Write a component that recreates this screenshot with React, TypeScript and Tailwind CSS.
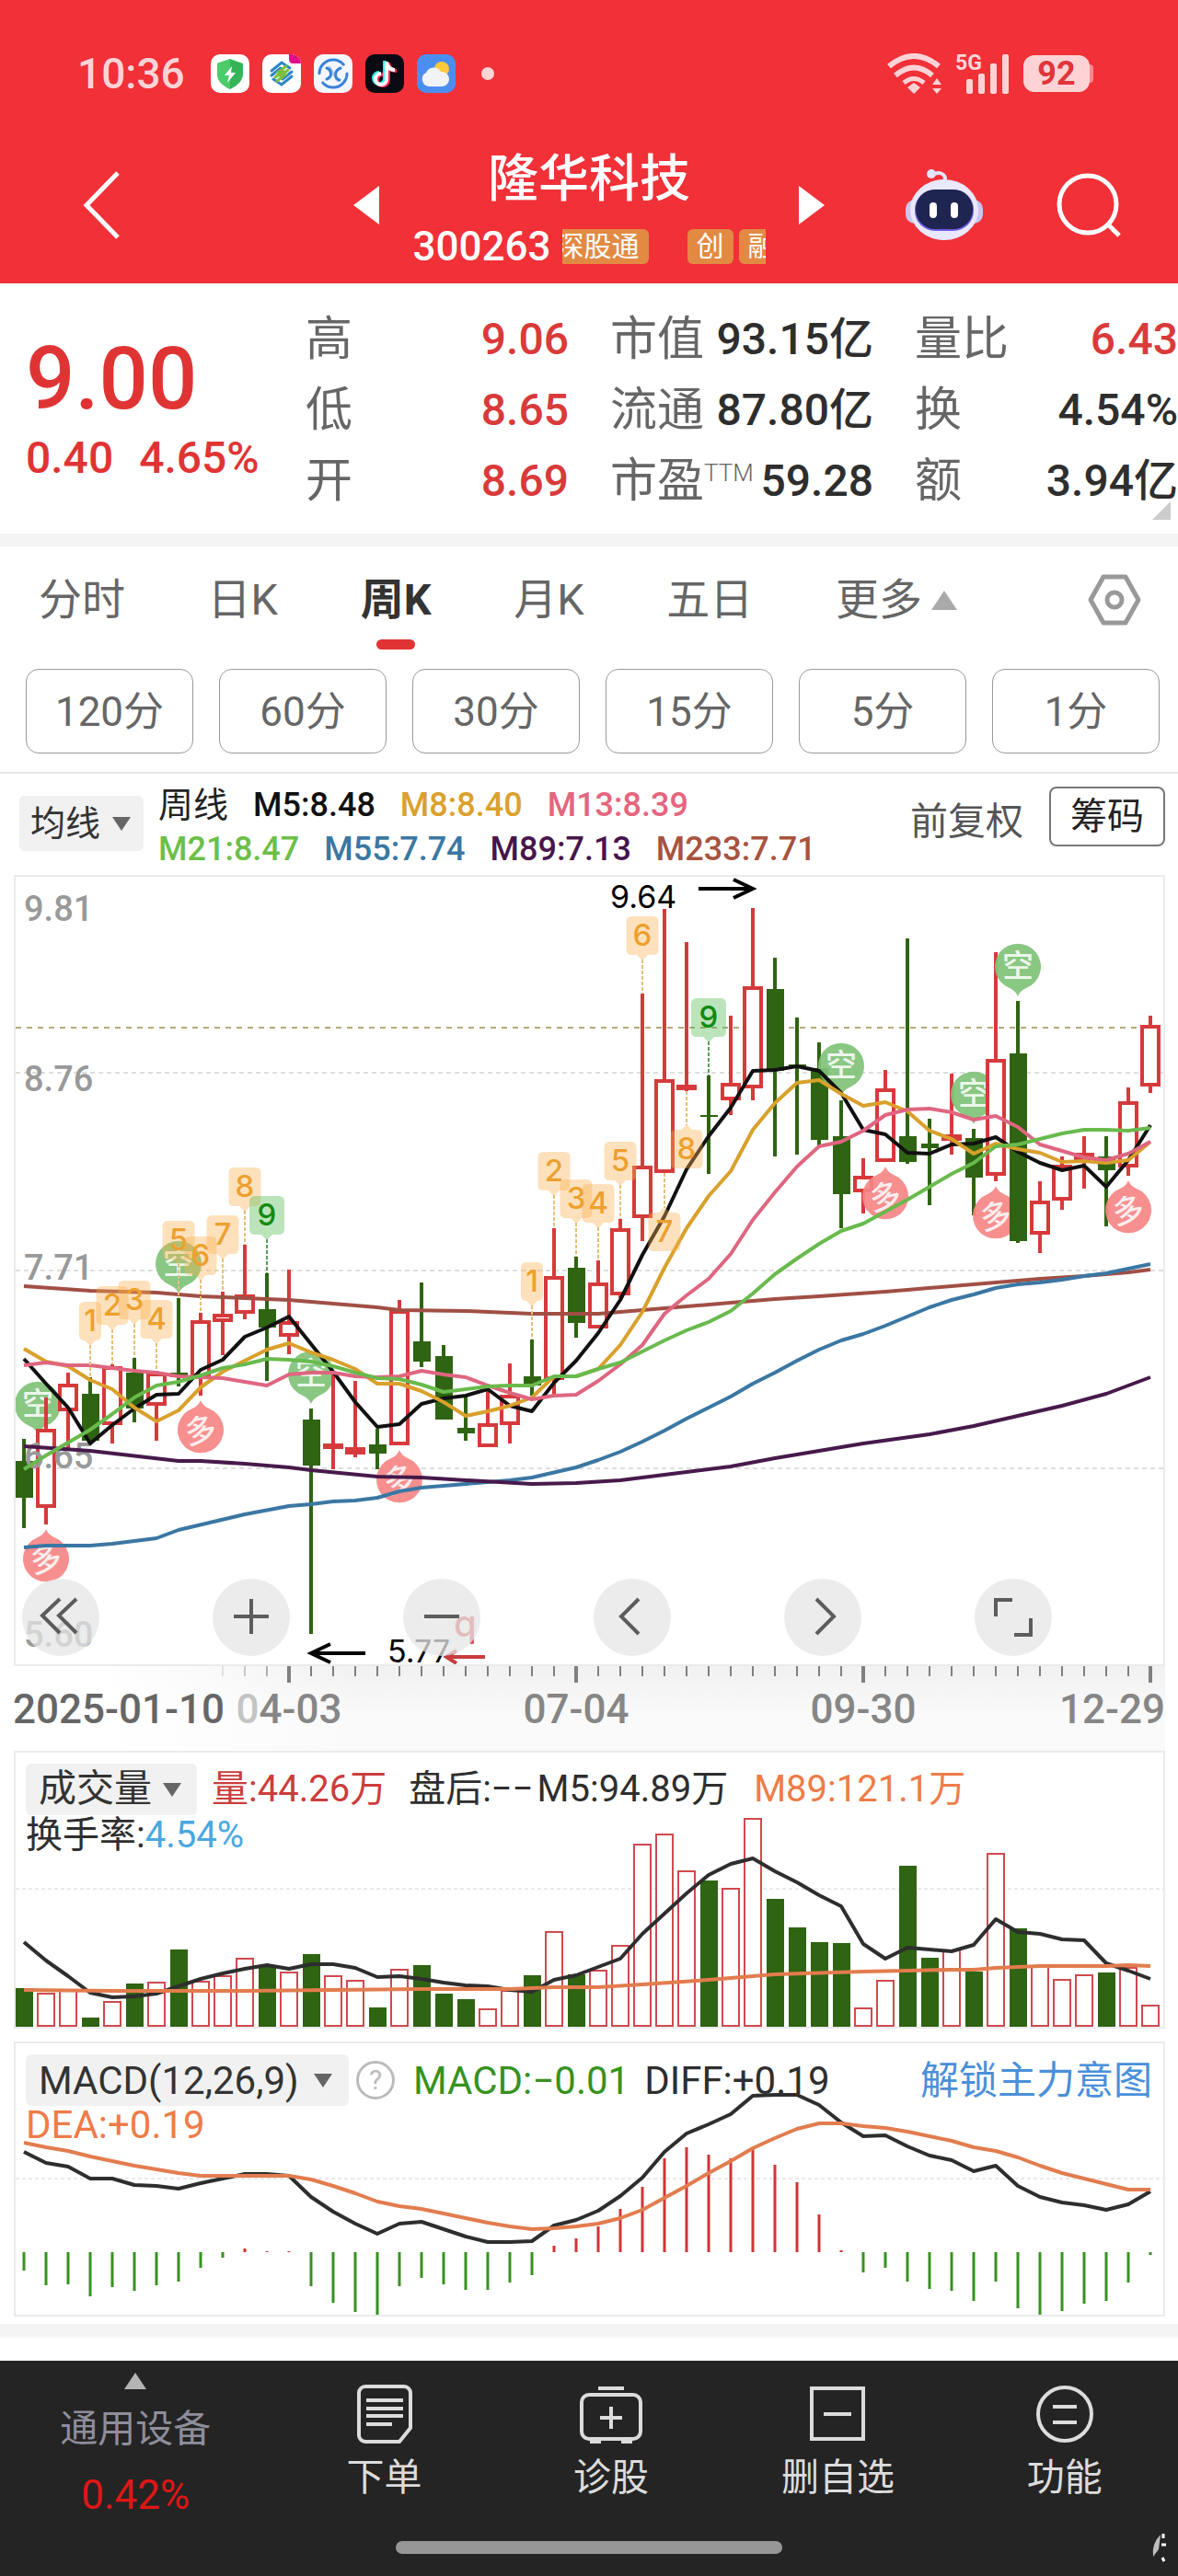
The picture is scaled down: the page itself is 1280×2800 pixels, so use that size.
import { type ReactNode } from "react";

/** Every candle sits on a fixed 24px pitch; the first one is centred on x=26. */
const STEP = 24;
const ORIGIN = 26;
const xAt = (i: number) => ORIGIN + STEP * i;

const RED = "#d63a3c";
const GREEN = "#2f6412";

// [up, high, bodyTop, bodyBottom, low]
type Candle = [0 | 1, number, number, number, number];

const CANDLES: Candle[] = [
  [0, 1563, 1587, 1627, 1660],
  [1, 1518, 1552, 1638, 1656],
  [1, 1491, 1503, 1533, 1575],
  [0, 1496, 1514, 1565, 1566],
  [1, 1482, 1484, 1548, 1568],
  [0, 1475, 1491, 1530, 1545],
  [1, 1489, 1491, 1527, 1565],
  [0, 1410, 1491, 1496, 1506],
  [1, 1426, 1434, 1496, 1516],
  [1, 1403, 1427, 1436, 1472],
  [1, 1352, 1406, 1427, 1433],
  [0, 1383, 1422, 1442, 1500],
  [1, 1379, 1435, 1452, 1471],
  [0, 1530, 1542, 1592, 1775],
  [1, 1491, 1568, 1574, 1596],
  [1, 1500, 1572, 1580, 1583],
  [0, 1552, 1569, 1579, 1596],
  [1, 1412, 1423, 1570, 1570],
  [0, 1393, 1457, 1479, 1485],
  [0, 1461, 1473, 1542, 1542],
  [0, 1516, 1551, 1557, 1565],
  [1, 1511, 1546, 1572, 1572],
  [1, 1481, 1515, 1548, 1568],
  [0, 1455, 1495, 1505, 1516],
  [1, 1334, 1386, 1499, 1516],
  [0, 1365, 1377, 1437, 1453],
  [1, 1369, 1393, 1443, 1443],
  [1, 1324, 1334, 1407, 1410],
  [1, 1079, 1266, 1323, 1348],
  [1, 987, 1172, 1274, 1274],
  [1, 1023, 1178, 1184, 1185],
  [0, 1168, 1211, 1213, 1275],
  [1, 1103, 1176, 1195, 1211],
  [1, 986, 1071, 1182, 1195],
  [0, 1040, 1074, 1163, 1256],
  [0, 1105, 1156, 1159, 1254],
  [0, 1132, 1160, 1238, 1244],
  [0, 1195, 1234, 1297, 1334],
  [1, 1258, 1277, 1295, 1318],
  [1, 1162, 1182, 1262, 1262],
  [0, 1019, 1234, 1262, 1264],
  [0, 1215, 1242, 1247, 1309],
  [1, 1166, 1232, 1239, 1254],
  [0, 1226, 1236, 1279, 1320],
  [1, 1034, 1150, 1277, 1283],
  [0, 1087, 1144, 1348, 1350],
  [1, 1283, 1304, 1341, 1361],
  [1, 1256, 1265, 1304, 1314],
  [1, 1234, 1252, 1260, 1291],
  [0, 1234, 1256, 1271, 1332],
  [1, 1181, 1196, 1268, 1277],
  [1, 1103, 1113, 1180, 1187],
];

const M5 = [
  1476, 1503, 1529, 1568, 1548, 1530, 1515, 1514, 1488, 1477, 1452, 1442, 1430,
  1460, 1490, 1523, 1550, 1547, 1525, 1519, 1516, 1509, 1527, 1533, 1502, 1478,
  1448, 1412, 1363, 1321, 1270, 1234, 1203, 1163, 1162, 1158, 1163, 1187, 1227,
  1232, 1252, 1253, 1243, 1242, 1235, 1251, 1263, 1271, 1266, 1289, 1260, 1222,
];
const M8 = [
  1465, 1479, 1484, 1499, 1509, 1529, 1544, 1532, 1507, 1490, 1478, 1466, 1459,
  1469, 1477, 1487, 1503, 1503, 1511, 1523, 1538, 1533, 1527, 1518, 1495, 1495,
  1487, 1461, 1425, 1377, 1334, 1299, 1272, 1227, 1198, 1176, 1173, 1188, 1201,
  1197, 1207, 1228, 1237, 1253, 1242, 1248, 1252, 1262, 1261, 1263, 1260, 1240,
];
const M13 = [
  1483, 1480, 1483, 1483, 1486, 1489, 1491, 1495, 1496, 1497, 1501, 1505, 1493,
  1491, 1491, 1495, 1496, 1495, 1489, 1493, 1496, 1505, 1513, 1520, 1516, 1515,
  1500, 1482, 1461, 1427, 1407, 1389, 1362, 1325, 1295, 1267, 1245, 1240, 1228,
  1211, 1205, 1204, 1208, 1216, 1212, 1224, 1243, 1250, 1257, 1260, 1253, 1240,
];
const M21 = [
  1596, 1581, 1567, 1553, 1536, 1518, 1505, 1501, 1494, 1486, 1482, 1476, 1477,
  1479, 1484, 1491, 1497, 1498, 1504, 1512, 1509, 1506, 1505, 1505, 1495, 1495,
  1487, 1480, 1468, 1456, 1445, 1436, 1424, 1405, 1384, 1367, 1351, 1337, 1329,
  1316, 1303, 1289, 1275, 1263, 1245, 1243, 1237, 1231, 1227, 1227, 1228, 1225,
];

// slow averages only need their turning points: [index, y]
type Knot = [number, number];
const M55: Knot[] = [
  [0, 1681], [1, 1679], [3, 1679], [4, 1677], [6, 1671], [7, 1662], [10, 1645],
  [12, 1636], [13, 1634], [14, 1631], [15, 1630], [16, 1627], [17, 1620],
  [18, 1616], [20, 1612], [22, 1608], [23, 1605], [25, 1594], [26, 1586],
  [27, 1577], [28, 1566], [29, 1554], [30, 1541], [31, 1529], [32, 1517],
  [33, 1503], [34, 1491], [35, 1478], [36, 1466], [37, 1456], [38, 1449],
  [39, 1440], [40, 1430], [41, 1420], [42, 1412], [43, 1406], [44, 1399],
  [45, 1395], [46, 1393], [47, 1390], [48, 1386], [49, 1383], [50, 1378],
  [51, 1373],
];
const M89: Knot[] = [
  [0, 1571], [3, 1576], [7, 1587], [8, 1587], [10, 1590], [12, 1594],
  [13, 1597], [16, 1604], [18, 1605], [20, 1608], [23, 1612], [25, 1611],
  [27, 1608], [29, 1602], [31, 1596], [32, 1593], [34, 1584], [38, 1568],
  [41, 1558], [43, 1549], [45, 1538], [47, 1527], [49, 1514], [51, 1496],
];
const M233: Knot[] = [
  [0, 1397], [3, 1402], [6, 1404], [8, 1408], [12, 1412], [16, 1420],
  [17, 1423], [20, 1424], [23, 1427], [26, 1427], [29, 1421], [32, 1415],
  [34, 1411], [36, 1408], [39, 1403], [40, 1401], [44, 1393], [46, 1389],
  [48, 1386], [50, 1382], [51, 1379],
];

const VOLUME = [
  42, 37, 41, 10, 28, 47, 49, 84, 50, 56, 75, 66, 60, 79, 56, 51, 21, 63, 67,
  36, 30, 20, 40, 56, 104, 57, 62, 89, 199, 210, 170, 159, 151, 227, 139, 108,
  92, 91, 21, 51, 175, 75, 84, 60, 189, 107, 66, 52, 57, 59, 65, 24,
];
const VOL_M5 = [
  208, 228, 245, 263, 268, 267, 264, 256, 248, 242, 237, 233, 237, 232, 232,
  236, 246, 245, 248, 252, 255, 256, 260, 262, 249, 244, 235, 226, 199, 177,
  155, 135, 123, 117, 131, 143, 157, 169, 210, 226, 214, 216, 218, 211, 183,
  197, 199, 205, 206, 231, 239, 248,
];
const VOL_M89: Knot[] = [
  [0, 260], [4, 261], [10, 261], [14, 260], [18, 259], [22, 259], [24, 257],
  [26, 257], [28, 254], [31, 249], [34, 243], [38, 240], [40, 239], [42, 238],
  [43, 238], [44, 236], [46, 234], [49, 234], [50, 233], [51, 234],
];

const MACD = [
  -20, -36, -35, -48, -38, -42, -36, -32, -17, -6, 4, 1, 1, -37, -55, -65, -70,
  -37, -28, -35, -41, -41, -33, -25, 7, 15, 28, 47, 71, 102, 114, 106, 102,
  112, 95, 76, 41, 2, -22, -17, -32, -40, -42, -53, -32, -61, -69, -64, -56,
  -53, -33, -3,
];
const DIFF = [
  120, 132, 136, 149, 149, 156, 157, 160, 154, 149, 144, 144, 146, 169, 185,
  198, 209, 198, 196, 204, 212, 218, 218, 217, 200, 194, 184, 168, 148, 120,
  100, 90, 79, 59, 58, 58, 69, 88, 103, 102, 114, 124, 129, 141, 135, 157, 169,
  175, 178, 183, 177, 163,
];
const DEA = [
  110, 115, 119, 125, 130, 135, 139, 143, 146, 146, 146, 146, 146, 150, 157,
  165, 174, 179, 182, 187, 192, 197, 201, 204, 203, 201, 198, 192, 183, 170,
  157, 143, 130, 116, 105, 95, 89, 89, 92, 94, 98, 103, 108, 115, 119, 126,
  135, 143, 149, 155, 161, 161,
];

// Nine-turn sequence flags: [index, digit, top of the box]
const FLAGS: [number, number, number][] = [
  [3, 1, 1414], [4, 2, 1397], [5, 3, 1391], [6, 4, 1412], [7, 5, 1326],
  [8, 6, 1343], [9, 7, 1320], [10, 8, 1268], [11, 9, 1299], [23, 1, 1371],
  [24, 2, 1251], [25, 3, 1281], [26, 4, 1286], [27, 5, 1240], [28, 6, 995],
  [31, 9, 1084],
];
// same flags, hung below the candle
const FLAGS_BELOW: [number, number, number][] = [
  [29, 7, 1317],
  [30, 8, 1227],
];

const SHORT_SIGNALS = [0, 7, 13, 37, 43, 45];
const LONG_SIGNALS = [1, 8, 17, 39, 44, 50];

const series = (ys: number[]) => ys.map((y, i) => `${xAt(i)},${y}`).join(" ");
const knots = (ks: Knot[]) => ks.map(([i, y]) => `${xAt(i)},${y}`).join(" ");

function Line({ points, color }: { points: string; color: string }) {
  return (
    <polyline
      points={points}
      fill="none"
      stroke={color}
      strokeWidth="4"
      strokeLinejoin="round"
    />
  );
}

function Signal({ x, y, kind }: { x: number; y: number; kind: "short" | "long" }) {
  const short = kind === "short";
  return (
    <g transform={`translate(${x} ${y})`}>
      <path
        d={
          short
            ? "M0 33C-2 28-5 26-9 24A25 25 0 1 1 9 24C5 26 2 28 0 33Z"
            : "M0-33C-2-28-5-26-9-24A25 25 0 1 0 9-24C5-26 2-28 0-33Z"
        }
        fill={short ? "#7fc277" : "#f68585"}
        fillOpacity="0.92"
      />
      <text
        textAnchor="middle"
        y="12"
        fontSize="34"
        fontWeight="500"
        fill="#fff"
        fillOpacity="0.85"
        transform={short ? undefined : "rotate(-12)"}
      >
        {short ? "空" : "多"}
      </text>
    </g>
  );
}

function Flag({ i, n, top, below }: { i: number; n: number; top: number; below?: boolean }) {
  const x = xAt(i);
  const w = n === 1 ? 24 : n === 9 ? 38 : 35;
  const color = n === 9 ? "#4db74d" : "#f9b04e";
  const tip = below ? top - 5 : top + 47;
  return (
    <g>
      <line
        x1={x}
        x2={x}
        y1={below ? CANDLES[i][4] : tip}
        y2={below ? tip : CANDLES[i][1]}
        stroke={n === 9 ? "#5a9a5a" : "#e3c07a"}
        strokeWidth="2"
        strokeDasharray="4 2"
      />
      <g fill={color} fillOpacity="0.38">
        <path
          d={
            below
              ? `M${x - w / 2 + 6} ${top}h${w / 2 - 12}l6-6 6 6h${w / 2 - 12}q6 0 6 6v30q0 6-6 6h${12 - w}q-6 0-6-6v-30q0-6 6-6z`
              : `M${x - w / 2 + 6} ${top}h${w - 12}q6 0 6 6v30q0 6-6 6h${12 - w / 2}l-6 6-6-6h${12 - w / 2}q-6 0-6-6v-30q0-6 6-6z`
          }
        />
      </g>
      <text
        x={x}
        y={top + 32}
        textAnchor="middle"
        fontSize="33"
        fontWeight="500"
        fill={n === 9 ? "#128a12" : "#eda02e"}
        className="font-[Inter]"
      >
        {n}
      </text>
    </g>
  );
}

function CandleChart() {
  return (
    <svg viewBox="17 952 1247 856" className="block w-full" role="img" aria-label="周K线图">
      {[1165, 1380, 1595].map((y) => (
        <line key={y} x1="17" x2="1264" y1={y} y2={y} stroke="#dedede" strokeWidth="2" strokeDasharray="5 4" />
      ))}
      <line x1="17" x2="1264" y1="1116" y2="1116" stroke="#b5a878" strokeWidth="2" strokeDasharray="6 6" />

      {CANDLES.map(([up, high, top, bottom, low], i) => {
        const x = xAt(i);
        return (
          <g key={i}>
            {up ? (
              <>
                <line x1={x} x2={x} y1={high} y2={top} stroke={RED} strokeWidth="4" />
                <line x1={x} x2={x} y1={bottom} y2={low} stroke={RED} strokeWidth="4" />
                <rect
                  x={x - 9}
                  y={top + 2}
                  width="18"
                  height={Math.max(bottom - top - 4, 2)}
                  fill="#fff"
                  stroke={RED}
                  strokeWidth="4"
                />
              </>
            ) : (
              <>
                <line x1={x} x2={x} y1={high} y2={low} stroke={GREEN} strokeWidth="4" />
                <rect x={x - 9} y={top} width="19" height={bottom - top} fill={GREEN} />
              </>
            )}
            {SHORT_SIGNALS.includes(i) && (
              <Signal kind="short" x={Math.max(x, 41)} y={high - 38} />
            )}
            {LONG_SIGNALS.includes(i) && <Signal kind="long" x={x} y={low + 38} />}
          </g>
        );
      })}

      <g fontSize="38" fontWeight="500" fill="#999">
        <text x="26" y="1000">9.81</text>
        <text x="26" y="1185">8.76</text>
        <text x="26" y="1390">7.71</text>
        <text x="26" y="1595">6.65</text>
        <text x="26" y="1789">5.60</text>
      </g>

      <Line points={knots(M233)} color="#a14f45" />
      <Line points={knots(M55)} color="#3b77a3" />
      <Line points={knots(M89)} color="#471a4b" />
      <Line points={series(M5)} color="#111" />
      <Line points={series(M8)} color="#d9a02c" />
      <Line points={series(M13)} color="#df6680" />
      <Line points={series(M21)} color="#69ba4d" />

      {FLAGS.map(([i, n, top]) => (
        <Flag key={i} i={i} n={n} top={top} />
      ))}
      {FLAGS_BELOW.map(([i, n, top]) => (
        <Flag key={i} i={i} n={n} top={top} below />
      ))}

      <g fontSize="34" fill="#000" className="font-[Inter]">
        <text x="663" y="986">9.64</text>
        <text x="421" y="1806">5.77</text>
      </g>
      <g fill="none" stroke="#000" strokeWidth="4">
        <path d="M759 965h58M797 955l21 10-21 10" />
        <path d="M397 1796h-58M359 1786l-21 10 21 10" />
      </g>
      <path d="M527 1800h-40M496 1793l-11 7 11 7" fill="none" stroke="#c83c3c" strokeWidth="4" />
      <text x="493" y="1778" fontSize="40" fontWeight="500" fill="#d64545" className="font-[Inter]">q</text>
    </svg>
  );
}

function TimeAxis() {
  const ticks = Array.from({ length: 43 }, (_, k) => k + 9);
  return (
    <svg viewBox="0 1811 1280 92" className="block w-full" role="img" aria-label="日期">
      <defs>
        <linearGradient id="axis-x">
          <stop offset="0.08" stopColor="#fff" />
          <stop offset="0.3" stopColor="#fff" stopOpacity="0" />
        </linearGradient>
        <linearGradient id="axis-y" x2="0" y2="1">
          <stop offset="0" stopColor="#f1f1f1" />
          <stop offset="0.6" stopColor="#fafafa" />
          <stop offset="1" stopColor="#fafafa" />
        </linearGradient>
      </defs>
      <rect x="15" y="1811" width="1251" height="92" fill="url(#axis-y)" />
      <rect x="15" y="1811" width="1251" height="92" fill="url(#axis-x)" />
      {ticks.map((i) => {
        const major = (i - 12) % 13 === 0;
        return (
          <line
            key={i}
            x1={xAt(i)}
            x2={xAt(i)}
            y1="1811"
            y2={major ? 1829 : 1822}
            stroke="#808080"
            strokeOpacity={i < 12 ? 0.2 + (i - 9) * 0.2 : 1}
            strokeWidth={major ? 4 : 2}
          />
        );
      })}
      <g fontSize="44" fontWeight="500" fill="#868686">
        <text x="14" y="1873" fill="#666">2025-01-10</text>
        <text x="314" y="1873" textAnchor="middle">
          <tspan fill="#c4c4c4">0</tspan>
          4-03
        </text>
        <text x="626" y="1873" textAnchor="middle">07-04</text>
        <text x="938" y="1873" textAnchor="middle">09-30</text>
        <text x="1266" y="1873" textAnchor="end">12-29</text>
      </g>
    </svg>
  );
}

function VolumeChart() {
  return (
    <svg viewBox="17 2 1247 298" className="block w-full [grid-area:1/1]" role="img" aria-label="成交量图">
      <line x1="17" x2="1264" y1="150" y2="150" stroke="#d4d4d4" strokeWidth="1" strokeDasharray="4 3" />
      {VOLUME.map((h, i) =>
        CANDLES[i][0] ? (
          <rect key={i} x={xAt(i) - 9} y={301 - h} width="18" height={h - 2} fill="#fff" stroke="#cf4a4e" strokeWidth="2" />
        ) : (
          <rect key={i} x={xAt(i) - 9} y={300 - h} width="19" height={h} fill={GREEN} />
        ),
      )}
      <Line points={series(VOL_M5)} color="#2e2e2e" />
      <Line points={knots(VOL_M89)} color="#e37c4e" />
    </svg>
  );
}

function MacdChart() {
  return (
    <svg viewBox="17 2 1247 295" className="block w-full [grid-area:1/1]" role="img" aria-label="MACD图">
      <line x1="17" x2="1264" y1="149" y2="149" stroke="#d4d4d4" strokeWidth="1" strokeDasharray="4 3" />
      {MACD.map((v, i) => (
        <line
          key={i}
          x1={xAt(i)}
          x2={xAt(i)}
          y1="229"
          y2={229 - v}
          stroke={v > 0 ? "#d03535" : "#36921f"}
          strokeWidth="3"
        />
      ))}
      <Line points={series(DIFF)} color="#2e2e2e" />
      <Line points={series(DEA)} color="#e37c4e" />
    </svg>
  );
}

function Caret({ up, className }: { up?: boolean; className: string }) {
  return (
    <svg viewBox="0 0 20 15" className={className} fill="currentColor" aria-hidden="true">
      <path d={up ? "M10 0l10 15H0z" : "M0 0h20L10 15z"} />
    </svg>
  );
}

function Picker({ label, value, className }: { label: string; value: string; className: string }) {
  return (
    <label className={`relative flex shrink-0 items-center rounded-md bg-[#f1f1f1] text-[#333] ${className}`}>
      <select aria-label={label} defaultValue={value} className="appearance-none bg-transparent outline-none">
        <option>{value}</option>
      </select>
      <Caret className="pointer-events-none w-5 text-[#666]" />
    </label>
  );
}

function AppIcon({ bg, children }: { bg: string; children: ReactNode }) {
  return (
    <svg viewBox="0 0 42 42" className="size-[42px]" aria-hidden="true">
      <rect width="42" height="42" rx="10" fill={bg} />
      {children}
    </svg>
  );
}

function StatusBar() {
  return (
    <div className="flex h-12 items-center pr-[92px] pl-[84px] text-[#ffd3d6]">
      <span className="text-[46px] leading-none font-medium">10:36</span>
      <div className="ml-[28px] flex items-center gap-[14px]">
        <AppIcon bg="#fff">
          <path d="M21 5l14 5v11c0 8-6 13-14 17C13 34 7 29 7 21V10z" fill="#35b558" />
          <path d="M21 5v33C13 34 7 29 7 21V10z" fill="#4ccb6b" />
          <path d="M23 13l-8 10h5l-2 8 9-11h-5z" fill="#fff" />
        </AppIcon>
        <AppIcon bg="#fff">
          <g fill="none" strokeWidth="3" strokeLinecap="round">
            <path d="M10 18l11-9 9 6M10 23l10-8" stroke="#2a86c8" />
            <path d="M32 24l-11 9-9-6M32 19l-10 8" stroke="#2a86c8" />
            <path d="M14 25l7-6h-3l8-6M28 17l-7 6h3l-8 6" stroke="#7cbf3f" />
          </g>
          <path d="M29 0h3a10 10 0 0 1 10 10h-9q-4 0-4-5z" fill="#e0108a" />
        </AppIcon>
        <AppIcon bg="#f3f7fd">
          <g fill="none" stroke="#3a82d8" strokeWidth="3" strokeLinecap="round">
            <circle cx="21" cy="21" r="15" strokeDasharray="36 11" />
            <path d="M14 15c6 2 6 10 0 12M29 15c-7 3-7 11-1 13" />
            <path d="M17 14l9 15" strokeOpacity="0.35" />
          </g>
        </AppIcon>
        <AppIcon bg="#0a0a12">
          <g fill="none" strokeWidth="4">
            <path d="M23 8v19a6 6 0 1 1-6-6M23 9c1 5 4 8 9 8" stroke="#25f4ee" transform="translate(-2 -1)" />
            <path d="M23 8v19a6 6 0 1 1-6-6M23 9c1 5 4 8 9 8" stroke="#fe2c55" transform="translate(2 1)" />
            <path d="M23 8v19a6 6 0 1 1-6-6M23 9c1 5 4 8 9 8" stroke="#fff" />
          </g>
        </AppIcon>
        <AppIcon bg="#4a8ff0">
          <circle cx="27" cy="16" r="8" fill="#ffc93a" />
          <path d="M13 35a8 8 0 0 1-3-15 9 9 0 0 1 16-1 8 8 0 0 1 2 16z" fill="#f1f3f6" />
        </AppIcon>
      </div>
      <span className="ml-7 size-[14px] rounded-full bg-current" />

      <div className="ml-auto flex items-center gap-[14px]">
        <svg viewBox="0 0 60 44" className="h-11 w-[60px]" fill="none" stroke="currentColor" aria-hidden="true">
          <g strokeWidth="6">
            <path d="M2 14Q29-8 56 14" />
            <path d="M9 24Q29 7 49 24" />
            <path d="M18 32Q29 23 40 32" strokeWidth="5" />
          </g>
          <path d="M29 32l7 5-7 7-7-7z" fill="currentColor" stroke="none" />
          <path d="M54 27l5 7H49zM54 44l5-6H49z" fill="currentColor" stroke="none" />
        </svg>
        <svg viewBox="0 0 60 44" className="h-11 w-[60px] overflow-visible" fill="currentColor" aria-hidden="true">
          <text x="0" y="18" fontSize="23" fontWeight="700">5G</text>
          <rect x="12" y="28" width="7" height="16" rx="2" />
          <rect x="25" y="22" width="7" height="22" rx="2" />
          <rect x="38" y="11" width="7" height="33" rx="2" />
          <rect x="51" y="1" width="7" height="43" rx="2" />
        </svg>
        <div className="flex items-center">
          <span className="flex h-10 w-[72px] items-center justify-center rounded-xl bg-current">
            <span className="text-[36px] leading-none font-bold text-[#e0353b]">92</span>
          </span>
          <span className="h-5 w-1 rounded-r-md bg-[#f78a8e]" />
        </div>
      </div>
    </div>
  );
}

function Tag({ children }: { children: ReactNode }) {
  return <span className="shrink-0 rounded-md bg-[#e28a43] px-[10px] text-[30px] leading-[38px]">{children}</span>;
}

function TitleBar() {
  return (
    <div className="grid grid-cols-[1fr_auto_1fr] items-center pt-[52px] pb-[18px] text-white">
      <button type="button" aria-label="返回" className="ml-[90px] w-10">
        <svg viewBox="0 0 40 74" className="h-[74px] w-10" fill="none" stroke="currentColor" strokeWidth="5">
          <path d="M38 2L4 37l34 35" />
        </svg>
      </button>

      <div className="flex items-center gap-9">
        <button type="button" aria-label="上一只">
          <svg viewBox="0 0 28 42" className="h-[42px] w-7" fill="currentColor">
            <path d="M28 0v42L0 21z" />
          </svg>
        </button>
        <div>
          <h1 className="text-center text-[55px] leading-[76px] font-medium">隆华科技</h1>
          <div className="mt-4 flex items-center gap-3 pb-[2px]">
            <span className="text-[44px] leading-10 font-medium">300263</span>
            <div className="flex w-[221px] overflow-hidden">
              <span className="-ml-4 flex shrink-0">
                <Tag>深股通</Tag>
              </span>
              <span className="ml-[42px] flex shrink-0 gap-[6px]">
                <Tag>创</Tag>
                <Tag>融</Tag>
              </span>
            </div>
          </div>
        </div>
        <button type="button" aria-label="下一只">
          <svg viewBox="0 0 28 42" className="h-[42px] w-7" fill="currentColor">
            <path d="M0 0v42l28-21z" />
          </svg>
        </button>
      </div>

      <div className="flex items-center justify-end gap-20 pr-[62px]">
        <button type="button" aria-label="智能助手">
          <svg viewBox="0 0 84 78" className="h-[78px] w-[84px]">
            <path d="M41 14c5-6-1-12-10-9" fill="none" stroke="#e6e4fb" strokeWidth="4" />
            <circle cx="28" cy="5" r="5" fill="#e6e4fb" />
            <rect x="0" y="33" width="84" height="26" rx="10" fill="#c9c6f2" />
            <ellipse cx="42" cy="44" rx="37" ry="33" fill="#e9e8fc" />
            <rect x="10" y="22" width="64" height="45" rx="22" fill="#6f5be0" />
            <rect x="11" y="22" width="62" height="43" rx="21" fill="#1d2550" />
            <rect x="26" y="36" width="8" height="17" rx="4" fill="#fff" />
            <rect x="49" y="36" width="8" height="17" rx="4" fill="#fff" />
          </svg>
        </button>
        <button type="button" aria-label="搜索">
          <svg viewBox="0 0 70 70" className="size-[70px]" fill="none" stroke="currentColor" strokeWidth="5">
            <circle cx="34" cy="34" r="31" />
            <path d="M56 56l12 12" />
          </svg>
        </button>
      </div>
    </div>
  );
}

type Stat = { label: string; sup?: string; value: string; red?: boolean };

const STATS: Stat[][] = [
  [
    { label: "高", value: "9.06", red: true },
    { label: "低", value: "8.65", red: true },
    { label: "开", value: "8.69", red: true },
  ],
  [
    { label: "市值", value: "93.15亿" },
    { label: "流通", value: "87.80亿" },
    { label: "市盈", sup: "TTM", value: "59.28" },
  ],
  [
    { label: "量比", value: "6.43", red: true },
    { label: "换", value: "4.54%" },
    { label: "额", value: "3.94亿" },
  ],
];

function Quote() {
  return (
    <section className="relative grid grid-cols-[259fr_286fr_286fr_286fr] gap-x-[45px] pt-[22px] pb-[19px] pl-7 font-medium">
      <div className="flex flex-col justify-center gap-3 text-[#e03434]">
        <div className="text-[94px] leading-[92px]">9.00</div>
        <div className="flex gap-7 text-[48px] leading-[56px] whitespace-nowrap">
          <span>0.40</span>
          <span>4.65%</span>
        </div>
      </div>
      {STATS.map((col, c) => (
        <dl key={c} className="text-[48px] leading-[77px] whitespace-nowrap">
          {col.map((s) => (
            <div key={s.label} className="flex justify-between">
              <dt className="flex text-[51px] font-normal text-[#666]">
                {s.label}
                {s.sup && <span className="text-[26px] leading-[60px] font-light">{s.sup}</span>}
              </dt>
              <dd className={s.red ? "text-[#d93a3a]" : "text-[#2e2e2e]"}>{s.value}</dd>
            </div>
          ))}
        </dl>
      ))}
      <svg viewBox="0 0 20 20" className="absolute right-2 bottom-[15px] size-5" fill="#ccc" aria-hidden="true">
        <path d="M20 0v20H0z" />
      </svg>
    </section>
  );
}

const TABS = ["分时", "日K", "周K", "月K", "五日"];
const MINUTES = ["120分", "60分", "30分", "15分", "5分", "1分"];

function PeriodTabs() {
  return (
    <nav>
      <div className="flex items-start justify-between pt-[22px] pr-10 pl-[42px]">
        <div className="flex grow items-start justify-between text-[47px] leading-[72px] text-[#666]">
          {TABS.map((t) => (
            <button
              key={t}
              type="button"
              className={t === "周K" ? "flex flex-col items-center font-bold text-[#333]" : ""}
            >
              {t}
              {t === "周K" && <span className="mt-[7px] h-[11px] w-[42px] rounded-full bg-[#e03434]" />}
            </button>
          ))}
          <button type="button" className="flex items-center gap-[10px]">
            更多
            <Caret up className="w-7 text-[#aaa]" />
          </button>
        </div>
        <button type="button" aria-label="设置" className="mt-2 ml-[142px]">
          <svg viewBox="0 0 58 56" className="h-14 w-[58px]" fill="none" stroke="#999" strokeWidth="5" strokeLinejoin="round">
            <path d="M17 3h24l14 25-14 25H17L3 28z" />
            <circle cx="29" cy="28" r="8" />
          </svg>
        </button>
      </div>
      <div className="mt-[21px] grid grid-cols-6 gap-7 pr-5 pl-7">
        {MINUTES.map((m) => (
          <button
            key={m}
            type="button"
            className="rounded-[14px] border border-[#999] pt-[11px] pb-[9px] text-[44px] leading-[70px] text-[#666]"
          >
            {m}
          </button>
        ))}
      </div>
    </nav>
  );
}

function AverageLegend() {
  return (
    <div className="mt-5 flex items-start border-t-2 border-[#e6e6e6] pt-[10px] pr-[14px] pb-1 pl-[21px]">
      <Picker label="主图指标" value="均线" className="mt-[14px] h-[60px] gap-3 pr-[14px] pl-3 text-[38px]" />
      <div className="ml-4 text-[36px] leading-[48px] font-medium whitespace-nowrap">
        <div className="flex gap-[27px]">
          <span className="text-[38px] font-normal text-[#222]">周线</span>
          <span className="text-[#111]">M5:8.48</span>
          <span className="text-[#dba12c]">M8:8.40</span>
          <span className="text-[#e5657e]">M13:8.39</span>
        </div>
        <div className="flex gap-[27px]">
          <span className="text-[#6cbf48]">M21:8.47</span>
          <span className="text-[#3b77a3]">M55:7.74</span>
          <span className="text-[#47154b]">M89:7.13</span>
          <span className="text-[#a8533f]">M233:7.71</span>
        </div>
      </div>
      <div className="mt-1 ml-auto flex items-center gap-[28px]">
        <button type="button" className="pt-3 text-[41px] leading-[53px] text-[#555]">
          前复权
        </button>
        <button
          type="button"
          className="rounded-lg border-2 border-[#777] px-[21px] text-[40px] leading-[61px] text-[#222]"
        >
          筹码
        </button>
      </div>
    </div>
  );
}

const CONTROLS: { label: string; d: string }[] = [
  { label: "快退", d: "M41 22L22 40l19 19M59 22L40 40l19 19" },
  { label: "放大", d: "M42 22v38M23 41h38" },
  { label: "缩小", d: "M23 41h38" },
  { label: "左移", d: "M49 22L30 41l19 19" },
  { label: "右移", d: "M35 22l19 19-19 19" },
  { label: "全屏", d: "M23 41V23h18M61 43v18H43" },
];

function ChartControls() {
  return (
    <div className="absolute bottom-[9px] left-[7px] flex gap-[123px]">
      {CONTROLS.map((c) => (
        <button
          key={c.label}
          type="button"
          aria-label={c.label}
          className="size-[84px] rounded-full bg-[#e6e6e6]/75"
        >
          <svg viewBox="0 0 84 84" fill="none" stroke="#5c5c5c" strokeWidth="4">
            <path d={c.d} />
          </svg>
        </button>
      ))}
    </div>
  );
}

function Indicators() {
  return (
    <div className="mr-[14px] ml-[15px] whitespace-nowrap text-[#2e2e2e]">
      <section className="grid border-2 border-[#ebebeb] text-[40px]">
        <VolumeChart />
        <div className="pt-[12px] pr-3 pl-[11px] [grid-area:1/1]">
          <div className="flex h-[56px] items-center">
            <Picker label="副图指标" value="成交量" className="h-full gap-3 pr-[17px] pl-[14px] text-[41px]" />
            <span className="ml-4 text-[#cb3d3d]">量:44.26万</span>
            <span className="ml-6">盘后:−−</span>
            <span className="ml-1">M5:94.89万</span>
            <span className="ml-7 text-[#ee7c48]">M89:121.1万</span>
          </div>
          <div className="leading-[44px]">
            换手率:<span className="text-[#4aa8e0]">4.54%</span>
          </div>
        </div>
      </section>

      <section className="mt-[14px] grid border-2 border-[#ebebeb] text-[42px]">
        <MacdChart />
        <div className="pt-[12px] pr-3 pl-[11px] [grid-area:1/1]">
          <div className="flex h-[56px] items-center">
            <Picker label="副图指标" value="MACD(12,26,9)" className="h-full gap-4 pr-[18px] pl-[14px]" />
            <button
              type="button"
              aria-label="说明"
              className="ml-2 size-[42px] rounded-full border-[3px] border-[#bbb] text-[30px] leading-[36px] text-[#bbb]"
            >
              ?
            </button>
            <span className="ml-5 text-[#36921f]">MACD:−0.01</span>
            <span className="ml-4">DIFF:+0.19</span>
            <a href="#unlock" className="ml-auto text-[#4a90d9]">
              解锁主力意图
            </a>
          </div>
          <div className="leading-[42px] text-[#ee7c48]">DEA:+0.19</div>
        </div>
      </section>
    </div>
  );
}

const ACTIONS: { label: string; icon: ReactNode }[] = [
  {
    label: "下单",
    icon: (
      <>
        <path d="M13 2h42a7 7 0 0 1 7 7v38L50 62H13a7 7 0 0 1-7-7V9a7 7 0 0 1 7-7z" />
        <path d="M14 17h40M14 26h40M14 34h40M14 43h28" />
      </>
    ),
  },
  {
    label: "诊股",
    icon: (
      <>
        <path d="M20 4h28" />
        <rect x="2" y="11" width="64" height="48" rx="8" />
        <path d="M34 24v24M22 36h24" />
        <path d="M11 62h12M45 62h12" />
      </>
    ),
  },
  {
    label: "删自选",
    icon: (
      <>
        <rect x="6" y="4" width="56" height="55" />
        <path d="M19 32h30" />
      </>
    ),
  },
  {
    label: "功能",
    icon: (
      <>
        <circle cx="34" cy="32" r="29" />
        <path d="M21 24h26M21 41h26" />
      </>
    ),
  },
];

function BottomBar() {
  return (
    <footer className="relative bg-[#242424] pb-[25px] text-[41px] leading-[48px] text-[#dcdcdc]">
      <div className="flex items-start">
        <button type="button" className="flex w-[23%] flex-col items-center pt-[13px] text-[#8e8e9b]">
          <Caret up className="h-[18px] w-8 text-[#b4b4b4]" />
          <span className="mt-[19px]">通用设备</span>
          <span className="mt-6 text-[44px] text-[#e01616]">0.42%</span>
        </button>
        {ACTIONS.map((a) => (
          <button key={a.label} type="button" className="flex flex-1 flex-col items-center gap-[13px] pt-[26px]">
            <svg viewBox="0 0 68 64" className="h-16 w-[68px]" fill="none" stroke="currentColor" strokeWidth="4">
              {a.icon}
            </svg>
            {a.label}
          </button>
        ))}
      </div>
      <div className="mx-auto mt-[26px] h-[14px] w-[420px] rounded-full bg-[#969696]" />
      <svg viewBox="0 0 18 34" className="absolute right-3 bottom-[14px] h-[34px] w-[18px]" aria-hidden="true">
        <path d="M11 2Q1 12 3 26l6-8z" fill="#bdbdbd" />
        <path d="M14 1v5M12 13h5M13 27l2 4" stroke="#fff" strokeWidth="3" />
      </svg>
    </footer>
  );
}

export default function App() {
  return (
    <div className="bg-white font-[Roboto,'Noto_Sans_CJK_SC',sans-serif]">
      <header className="bg-[#f13038] pt-14">
        <StatusBar />
        <TitleBar />
      </header>
      <Quote />
      <div className="h-[14px] bg-[#f4f4f4]" />
      <PeriodTabs />
      <AverageLegend />
      <div className="relative mr-[14px] ml-[15px] border-2 border-[#ebebeb]">
        <CandleChart />
        <ChartControls />
      </div>
      <TimeAxis />
      <Indicators />
      <div className="mt-2 mb-[25px] h-[15px] bg-[#f4f4f4]" />
      <BottomBar />
    </div>
  );
}
